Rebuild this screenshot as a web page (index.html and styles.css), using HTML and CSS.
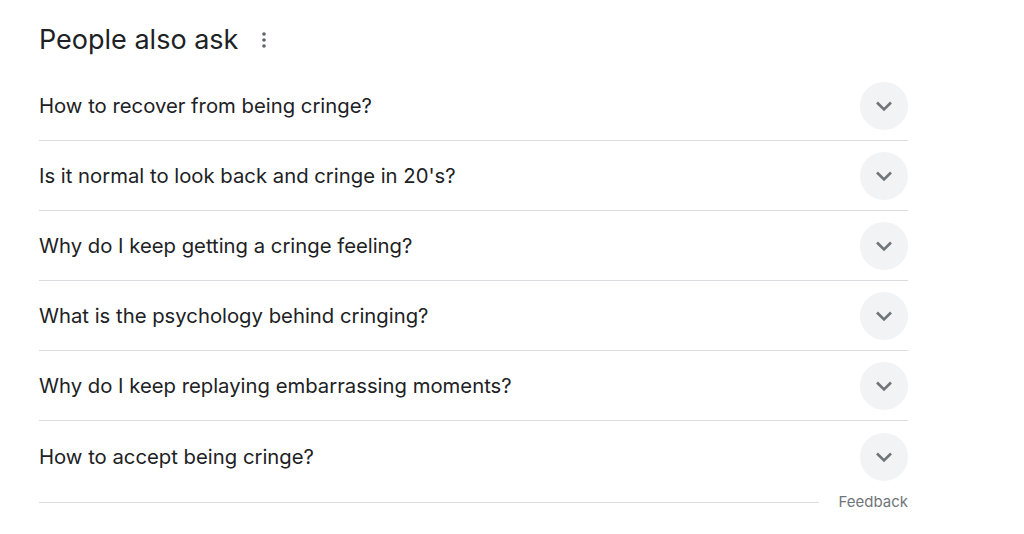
FILE: index.html
```html
<!DOCTYPE html>
<html>
<head>
<meta charset="utf-8">
<link rel="stylesheet" href="styles.css">
</head>
<body>
<div class="paa">
  <div class="head">
    <h2 class="title">People also ask</h2>
    <span class="more"><svg width="4" height="16" viewBox="0 0 4 16"><circle cx="2" cy="2" r="1.8"/><circle cx="2" cy="8" r="1.8"/><circle cx="2" cy="14" r="1.8"/></svg></span>
  </div>
  <div class="row"><span class="q">How to recover from being cringe?</span><span class="btn"><svg width="18" height="12" viewBox="0 0 18 12"><polyline points="2,2.5 9,9.5 16,2.5"/></svg></span></div>
  <div class="row"><span class="q">Is it normal to look back and cringe in 20's?</span><span class="btn"><svg width="18" height="12" viewBox="0 0 18 12"><polyline points="2,2.5 9,9.5 16,2.5"/></svg></span></div>
  <div class="row"><span class="q">Why do I keep getting a cringe feeling?</span><span class="btn"><svg width="18" height="12" viewBox="0 0 18 12"><polyline points="2,2.5 9,9.5 16,2.5"/></svg></span></div>
  <div class="row"><span class="q">What is the psychology behind cringing?</span><span class="btn"><svg width="18" height="12" viewBox="0 0 18 12"><polyline points="2,2.5 9,9.5 16,2.5"/></svg></span></div>
  <div class="row"><span class="q">Why do I keep replaying embarrassing moments?</span><span class="btn"><svg width="18" height="12" viewBox="0 0 18 12"><polyline points="2,2.5 9,9.5 16,2.5"/></svg></span></div>
  <div class="row last"><span class="q">How to accept being cringe?</span><span class="btn"><svg width="18" height="12" viewBox="0 0 18 12"><polyline points="2,2.5 9,9.5 16,2.5"/></svg></span></div>
  <div class="foot"><span class="line"></span><span class="fb">Feedback</span></div>
</div>
</body>
</html>
```
FILE: styles.css
```css
html, body { margin: 0; padding: 0; background: #fff; }
body { font-family: Inter, Roboto, "Noto Sans", Arial, sans-serif; color: #202124; }
.paa { width: 869px; margin-left: 39px; }
.head { height: 71px; display: flex; align-items: center; gap: 24px; }
.title { margin: 0; font-size: 27px; font-weight: 400; line-height: 32px; color: #202124; padding-top: 8px; }
.more { display: flex; padding-top: 8px; }
.more svg { fill: #5f6368; }
.row { height: 69px; border-bottom: 1px solid #dadce0; display: flex; align-items: center; justify-content: space-between; }
.row.last { border-bottom: none; height: 72px; }
.q { font-size: 20.3px; line-height: 26px; color: #202124; }
.btn { width: 48px; height: 48px; border-radius: 50%; background: #f1f3f4; display: flex; align-items: center; justify-content: center; }
.btn svg { fill: none; stroke: #70757a; stroke-width: 2.6; }
.foot { height: 18px; display: flex; align-items: center; gap: 20px; }
.line { flex: 1; height: 1px; background: #dadce0; }
.fb { font-size: 15px; color: #70757a; line-height: 18px; }
```
